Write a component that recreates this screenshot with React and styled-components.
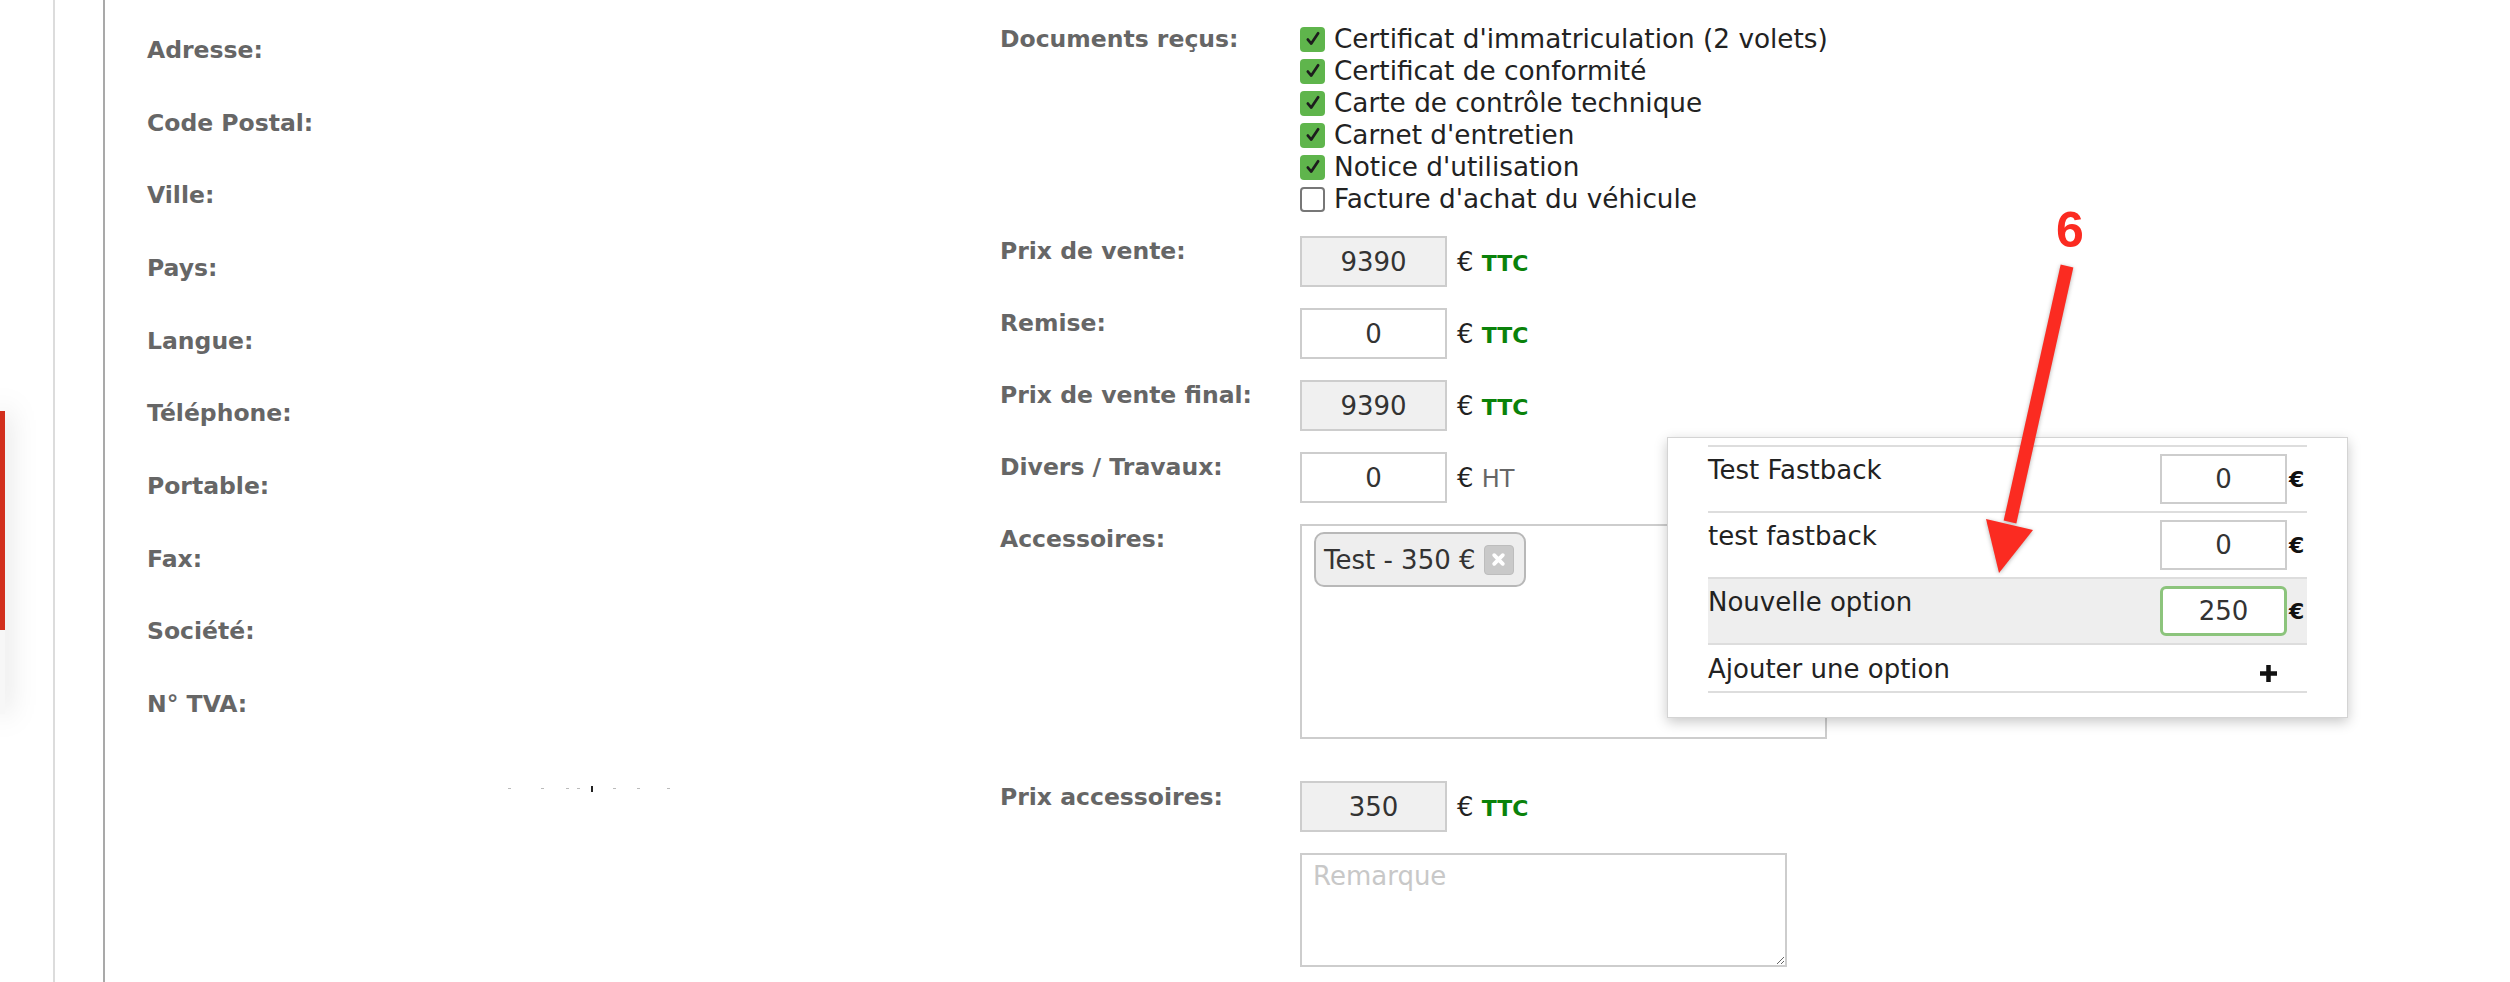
import styled, { createGlobalStyle } from 'styled-components';

const GlobalStyle = createGlobalStyle`
  html, body { margin: 0; padding: 0; background: #fff; }
  body { font-family: "DejaVu Sans", Verdana, sans-serif; color: #222; }
  * { box-sizing: border-box; }
`;

const Page = styled.div`
  position: relative;
  display: flex;
  width: 2510px;
  height: 982px;
  overflow: hidden;
  background: #fff;
`;

/* the side menu card sticking out on the left edge */
const SideRail = styled.aside`
  width: 55px;
  flex-shrink: 0;
  padding-top: 411px;
  border-right: 2px solid #dcdcdc;
`;

const SideCard = styled.div`
  display: flex;
  flex-direction: column;
  width: 5px;
  box-shadow: 0 0 28px rgba(0, 0, 0, 0.35);
`;

const CardTop = styled.div`
  height: 219px;
  background: #d22f1d;
`;

const CardFoot = styled.div`
  height: 84px;
  background: #f7f7f7;
`;

const Gutter = styled.div`
  width: 50px;
  flex-shrink: 0;
  border-right: 2px solid #a9a9a9;
`;

const ContactPanel = styled.section`
  width: 895px;
  flex-shrink: 0;
  padding: 34px 0 0 42px;
`;

const ContactList = styled.div`
  display: grid;
  grid-auto-rows: 72.66px;
`;

const Label = styled.div`
  font-size: 23.5px;
  line-height: 32px;
  font-weight: bold;
  color: #666;
  white-space: nowrap;
`;

const Dots = styled.div`
  display: flex;
  align-items: center;
  height: 8px;
  margin: 24px 0 0 361px;
`;

const Dot = styled.span`
  display: block;
  margin-left: ${({ $ml }) => $ml}px;
  width: ${({ $dark }) => ($dark ? 2 : 3)}px;
  height: ${({ $dark }) => ($dark ? 6 : 1)}px;
  background: ${({ $dark }) => ($dark ? '#222' : '#bbb')};
`;

const SalePanel = styled.section`
  flex: 1;
  display: grid;
  grid-template-columns: 300px 1fr;
  row-gap: 21px;
  align-content: start;
  align-items: start;
  padding-top: 23px;
`;

const RowLabel = styled(Label)`
  margin-top: ${({ $offset }) => $offset || 0}px;
`;

const DocList = styled.div`
  display: flex;
  flex-direction: column;
`;

const DocItem = styled.div`
  display: flex;
  align-items: center;
  gap: 9px;
  height: 32px;
  font-size: 26.3px;
  color: #222;
  white-space: nowrap;
`;

const Check = styled.span`
  display: flex;
  align-items: center;
  justify-content: center;
  width: 25px;
  height: 25px;
  border-radius: 4px;
  background: ${({ $on }) => ($on ? '#5fb54c' : '#fff')};
  border: ${({ $on }) => ($on ? 'none' : '2px solid #777')};
`;

const Field = styled.div`
  display: flex;
  align-items: center;
  margin-top: ${({ $offset }) => $offset || 0}px;
`;

const PriceInput = styled.input`
  width: ${({ $w }) => $w || 147}px;
  height: ${({ $h }) => $h || 51}px;
  border: 2px solid #cdcdcd;
  background: ${({ readOnly }) => (readOnly ? '#f0f0f0' : '#fff')};
  font-family: "DejaVu Sans", Verdana, sans-serif;
  font-size: 26px;
  color: #333;
  text-align: center;
  outline: none;
  padding: 0;
`;

const Unit = styled.span`
  margin-left: 10px;
  font-size: 26px;
  color: #222;
  white-space: nowrap;
`;

const Tax = styled.span`
  font-size: ${({ $ttc }) => ($ttc ? 22 : 24)}px;
  font-weight: ${({ $ttc }) => ($ttc ? 'bold' : 'normal')};
  color: ${({ $ttc }) => ($ttc ? '#0a820a' : '#666')};
`;

const AccessoryBox = styled.div`
  width: 527px;
  height: 215px;
  border: 2px solid #cdcdcd;
  padding: 6px 12px;
`;

const Tag = styled.div`
  display: inline-flex;
  align-items: center;
  gap: 8px;
  height: 55px;
  padding: 0 10px 0 8px;
  border: 2px solid #b8b8b8;
  border-radius: 10px;
  background: #eee;
  font-size: 26px;
  color: #333;
`;

const TagRemove = styled.span`
  display: flex;
  align-items: center;
  justify-content: center;
  width: 30px;
  height: 30px;
  border-radius: 4px;
  background: #c9c9c9;
  border: 1px solid #bdbdbd;
`;

const Remark = styled.textarea`
  width: 487px;
  height: 114px;
  border: 2px solid #cdcdcd;
  padding: 6px 11px;
  font-family: "DejaVu Sans", Verdana, sans-serif;
  font-size: 26px;
  color: #333;
  outline: none;

  &::placeholder {
    color: #c8c8c8;
  }
`;

/* options dropdown, floating above the accessories box */
const Popup = styled.div`
  position: absolute;
  left: 1667px;
  top: 437px;
  width: 681px;
  height: 281px;
  padding: 7px 40px 0 40px;
  background: #fff;
  border: 1px solid #d4d4d4;
  box-shadow: 0 4px 12px rgba(0, 0, 0, 0.22);
  z-index: 2;
`;

const OptionList = styled.div`
  border-top: 2px solid #ddd;
`;

const OptionRow = styled.div`
  display: flex;
  align-items: flex-start;
  padding: ${({ $add }) => ($add ? '8px 0 6px' : '7px 0')};
  border-bottom: 2px solid #ddd;
  background: ${({ $active }) => ($active ? '#eee' : 'transparent')};
`;

const OptionName = styled.div`
  flex: 1;
  font-size: 26px;
  line-height: 32px;
  color: #222;
  white-space: nowrap;
`;

const OptionInput = styled(PriceInput)`
  border: ${({ $focus }) => ($focus ? '3px solid #8cc47c' : '2px solid #cdcdcd')};
  border-radius: ${({ $focus }) => ($focus ? 6 : 0)}px;
  background: #fff;
`;

const Euro = styled.span`
  align-self: center;
  width: 18px;
  margin-left: 2px;
  font-size: 22px;
  font-weight: bold;
  color: #111;
`;

const AddIcon = styled.svg`
  margin: 11px 29px 0 0;
`;

/* screenshot annotation */
const Marker = styled.div`
  position: absolute;
  left: 2056px;
  top: 205px;
  font-family: "Liberation Sans", Arial, sans-serif;
  font-size: 50px;
  line-height: 50px;
  font-weight: bold;
  color: #fb2b21;
  z-index: 3;
`;

const Arrow = styled.svg`
  position: absolute;
  left: 1960px;
  top: 250px;
  z-index: 3;
  filter: drop-shadow(0 1px 2px rgba(0, 0, 0, 0.3));
`;

const CheckMark = () => (
  <svg width="16" height="16" viewBox="0 0 14 14">
    <path d="M2.5 7.5 L5.5 11 L11.5 2" fill="none" stroke="#1d1d1d" strokeWidth="2.4" strokeLinecap="round" strokeLinejoin="round" />
  </svg>
);

const contacts = ['Adresse:', 'Code Postal:', 'Ville:', 'Pays:', 'Langue:', 'Téléphone:', 'Portable:', 'Fax:', 'Société:', 'N° TVA:'];

const docs = [
  ["Certificat d'immatriculation (2 volets)", true],
  ['Certificat de conformité', true],
  ['Carte de contrôle technique', true],
  ["Carnet d'entretien", true],
  ["Notice d'utilisation", true],
  ["Facture d'achat du véhicule", false],
];

const dots = [
  [0, false], [30, false], [22, false], [8, false], [11, true], [20, false], [21, false], [27, false],
];

const prices = [
  ['Prix de vente:', '9390', true, 'TTC'],
  ['Remise:', '0', false, 'TTC'],
  ['Prix de vente final:', '9390', true, 'TTC'],
  ['Divers / Travaux:', '0', false, 'HT'],
];

const options = [
  ['Test Fastback', '0'],
  ['test fastback', '0'],
  ['Nouvelle option', '250', true],
];

const App = () => {
  return (
    <Page>
      <GlobalStyle />
      <SideRail>
        <SideCard>
          <CardTop />
          <CardFoot />
        </SideCard>
      </SideRail>
      <Gutter />

      <ContactPanel>
        <ContactList>
          {contacts.map((c) => (
            <Label key={c}>{c}</Label>
          ))}
        </ContactList>
        <Dots>
          {dots.map(([ml, dark], i) => (
            <Dot key={i} $ml={ml} $dark={dark} />
          ))}
        </Dots>
      </ContactPanel>

      <SalePanel>
        <RowLabel>Documents reçus:</RowLabel>
        <DocList>
          {docs.map(([name, on]) => (
            <DocItem key={name}>
              <Check $on={on}>{on && <CheckMark />}</Check>
              {name}
            </DocItem>
          ))}
        </DocList>

        {prices.map(([label, value, locked, tax]) => (
          <>
            <RowLabel key={label} $offset={-1}>{label}</RowLabel>
            <Field key={label + 'f'}>
              <PriceInput readOnly={locked} defaultValue={value} />
              <Unit>
                € <Tax $ttc={tax === 'TTC'}>{tax}</Tax>
              </Unit>
            </Field>
          </>
        ))}

        <RowLabel $offset={-1}>Accessoires:</RowLabel>
        <AccessoryBox>
          <Tag>
            Test - 350 €
            <TagRemove>
              <svg width="15" height="15" viewBox="0 0 14 14">
                <path d="M3 3 L11 11 M11 3 L3 11" stroke="#fff" strokeWidth="3.6" strokeLinecap="round" />
              </svg>
            </TagRemove>
          </Tag>
        </AccessoryBox>

        <RowLabel $offset={21}>Prix accessoires:</RowLabel>
        <Field $offset={21}>
          <PriceInput readOnly defaultValue="350" />
          <Unit>
            € <Tax $ttc>TTC</Tax>
          </Unit>
        </Field>

        <span />
        <Remark placeholder="Remarque" />
      </SalePanel>

      <Popup>
        <OptionList>
          {options.map(([name, value, active]) => (
            <OptionRow key={name} $active={active}>
              <OptionName>{name}</OptionName>
              <OptionInput $w={127} $h={50} $focus={active} defaultValue={value} />
              <Euro>€</Euro>
            </OptionRow>
          ))}
          <OptionRow $add>
            <OptionName>Ajouter une option</OptionName>
            <AddIcon width="19" height="19" viewBox="0 0 19 19">
              <path d="M9.5 1 V18 M1 9.5 H18" stroke="#111" strokeWidth="4.5" />
            </AddIcon>
          </OptionRow>
        </OptionList>
      </Popup>

      <Marker>6</Marker>
      <Arrow width="140" height="340" viewBox="0 0 140 340">
        <line x1="107" y1="16" x2="50" y2="272" stroke="#fb2b21" strokeWidth="13" />
        <polygon points="26,269 73,280 39,323" fill="#fb2b21" />
      </Arrow>
    </Page>
  );
};

export default App;
